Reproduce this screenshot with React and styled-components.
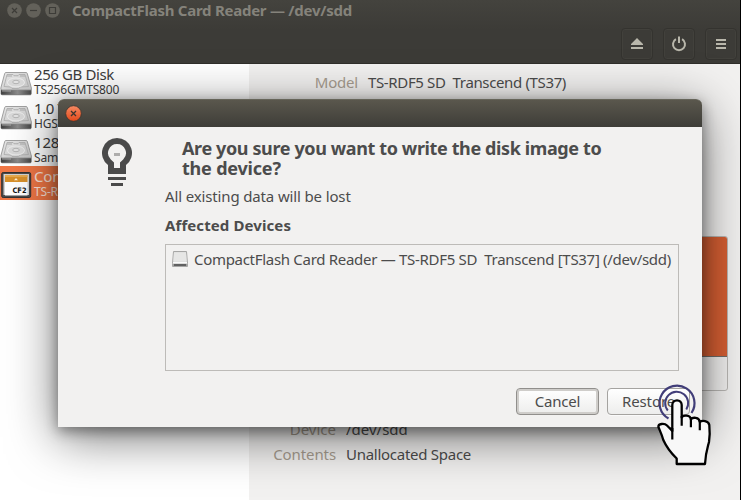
import React from "react";
import styled, { createGlobalStyle } from "styled-components";

const GlobalStyle = createGlobalStyle`
  * { box-sizing: border-box; }
  body { margin: 0; overflow: hidden; }
`;

const Screen = styled.div`
  position: relative;
  width: 741px;
  height: 500px;
  overflow: hidden;
  font-family: "Noto Sans", sans-serif;
  font-size: 15px;
  line-height: 20px;
  color: #4c4c4c;
`;

const Text = styled.span`
  display: block;
  white-space: pre;
  letter-spacing: ${(p) => p.$track || 0}px;
`;

/* ---------- Main window ---------- */

const Window = styled.div`
  display: flex;
  flex-direction: column;
  height: 500px;
  background: #f2f1f0;
  border-right: 1px solid #000;
`;

const Header = styled.header`
  flex: none;
  height: 64px;
  background: linear-gradient(#44433e, #3c3b37 30px);
  border-bottom: 1px solid #2f2e2a;
`;

const TitleBar = styled.div`
  display: flex;
  align-items: center;
  gap: 4px;
  height: 21px;
  padding-left: 7px;
`;

const WindowTitle = styled(Text)`
  margin: -2px 0 0 8px;
  color: #85837b;
  font-weight: 700;
`;

const ControlIcon = styled.svg`
  width: 15px;
  height: 15px;
  display: block;
`;

const Toolbar = styled.div`
  display: flex;
  justify-content: flex-end;
  gap: 10px;
  padding: 7px 3px 0 0;
`;

const ToolButton = styled.button`
  display: grid;
  place-items: center;
  width: 32px;
  height: 32px;
  padding: 0;
  border: 1px solid #34332f;
  border-radius: 4px;
  background: transparent;
  box-shadow: inset 0 0 0 1px #42413c;
`;

const Body = styled.div`
  display: flex;
  flex: 1;
  min-height: 0;
`;

const Sidebar = styled.nav`
  flex: none;
  width: 249px;
  background: #fff;
`;

const DeviceRow = styled.div`
  display: flex;
  align-items: center;
  gap: 2px;
  height: 34px;
  color: ${(p) => (p.$selected ? "#fbe3d9" : "#3c3c3c")};
  background: ${(p) => (p.$selected ? "#f07746" : "transparent")};
`;

const DeviceLabel = styled.div`
  display: flex;
  flex-direction: column;
  padding-bottom: 1px;
`;

const DeviceName = styled(Text)`
  line-height: 17px;
`;

const DeviceModel = styled(Text)`
  font-size: 12px;
  line-height: 13px;
`;

const DeviceIcon = styled.svg`
  width: 32px;
  height: 32px;
  flex: none;
`;

const Details = styled.main`
  flex: 1;
  display: flex;
  flex-direction: column;
  padding: 8px 12px 0 0;
`;

const Field = styled.div`
  display: grid;
  grid-template-columns: ${(p) => p.$label}px 1fr;
  column-gap: 10px;
  height: 25px;
`;

const FieldName = styled(Text)`
  justify-self: end;
  color: #a69c8f;
`;

const VolumeMap = styled.div`
  margin: 139px 0 28px 24px;
  height: 155px;
  border: 1px solid #b9b7b4;
  border-radius: 3px;
`;

const Volume = styled.div`
  height: 120px;
  background: #d65f33;
  border-bottom: 1px solid #6e6d6a;
  border-radius: 2px 2px 0 0;
`;

/* ---------- Dialog ---------- */

const Dialog = styled.section`
  position: absolute;
  left: 58px;
  top: 99px;
  width: 644px;
  height: 328px;
  display: flex;
  flex-direction: column;
  background: #f2f1f0;
  border-radius: 6px 6px 0 0;
  box-shadow: 0 4px 14px rgba(0, 0, 0, 0.4), 0 10px 50px rgba(0, 0, 0, 0.55);
`;

const DialogBar = styled.div`
  flex: none;
  display: flex;
  align-items: center;
  height: 28px;
  padding: 0 0 0 7px;
  border-radius: 6px 6px 0 0;
  background: linear-gradient(#5a574d, #3e3d38);
  border-top: 1px solid #66655a;
`;

const CloseIcon = styled.svg`
  width: 17px;
  height: 17px;
`;

const DialogBody = styled.div`
  flex: 1;
  display: grid;
  grid-template-columns: 107px 514px;
`;

const BulbIcon = styled.svg`
  width: 32px;
  height: 50px;
  margin: 10px 0 0 43px;
`;

const Message = styled.div`
  display: flex;
  flex-direction: column;
`;

const Heading = styled.h1`
  margin: 11px 0 8px 17px;
  font-size: 18px;
  line-height: 20px;
  font-weight: 700;
`;

const SectionTitle = styled(Text)`
  margin-top: 9px;
  font-weight: 700;
`;

const DeviceList = styled.div`
  height: 127px;
  margin-top: 9px;
  border: 1px solid #bdbbb8;
`;

const AffectedRow = styled.div`
  display: flex;
  align-items: center;
  gap: 6px;
  padding: 4px 6px;
`;

const DriveIcon = styled.svg`
  width: 16px;
  height: 16px;
  flex: none;
`;

const Actions = styled.footer`
  flex: none;
  display: flex;
  justify-content: flex-end;
  gap: 8px;
  padding: 0 12px 12px 0;
`;

const Button = styled.button`
  display: grid;
  place-items: center;
  width: 83px;
  height: 27px;
  padding: 0 0 2px;
  border: 1px solid ${(p) => (p.$focused ? "#918f8c" : "#a5a3a0")};
  border-radius: 4px;
  background: linear-gradient(#fff, #ededec);
  box-shadow: ${(p) => (p.$focused ? "inset 0 0 0 2px #cfcdca, inset 0 -2px 0 #b0aeab" : "0 1px 0 #fafafa")};
  font: inherit;
  color: #4c4c4c;
`;

const Pointer = styled.svg`
  position: absolute;
  left: 650px;
  top: 380px;
  width: 70px;
  height: 90px;
`;

/* ---------- Drawings ---------- */

const glyphs = {
  close: "M5 5l5 5M10 5l-5 5",
  minimize: "M4 7.5h7",
  maximize: "M4.5 4.5h6v6h-6z",
};

const Control = ({ kind }) => (
  <ControlIcon viewBox="0 0 15 15">
    <circle cx="7.5" cy="7.5" r="7.3" fill="#63615a" />
    <path d={glyphs[kind]} fill="none" stroke="#3d3c38" strokeWidth="1.2" />
  </ControlIcon>
);

const HardDisk = () => (
  <DeviceIcon viewBox="0 0 32 32">
    <defs>
      <linearGradient id="diskTop" x1="0" y1="0" x2="1" y2="1">
        <stop offset="0" stopColor="#e9e9e9" />
        <stop offset="1" stopColor="#c2c2c2" />
      </linearGradient>
      <linearGradient id="diskFront" x1="0" x2="1">
        <stop offset="0" stopColor="#3f3f3f" />
        <stop offset="0.55" stopColor="#8c8c8c" />
        <stop offset="1" stopColor="#484848" />
      </linearGradient>
    </defs>
    <path d="M1 24.5h30.2v4.3q0 1-1 1H2q-1 0-1-1z" fill="url(#diskFront)" stroke="#4f4f4f" strokeWidth=".6" />
    <path d="M6 7.5h20q1 0 1.3 1L31.4 23q.3 2-1 2H1.8q-1.2 0-1-2L4.7 8.5q.3-1 1.3-1z" fill="url(#diskTop)" stroke="#8b8b8b" strokeWidth=".8" />
    <path d="M2 26h9" stroke="#c8c8c8" strokeWidth=".7" />
    <path d="M7 9.5h6l1 1.2h4l1-1.2h6l3.5 12-8 .5-2 1.5H12L10.500 22 4 21.500z" fill="none" stroke="#aaa" strokeWidth=".8" />
    <ellipse cx="16" cy="17.5" rx="8.5" ry="4.5" fill="#d8d8d8" stroke="#f1f1f1" strokeWidth=".8" />
    <ellipse cx="16" cy="17" rx="3.3" ry="1.7" fill="#e3e3e3" stroke="#aaa" strokeWidth=".8" />
    <path d="M7 11h5M20 11h5" stroke="#a9a9a9" />
  </DeviceIcon>
);

const FlashCard = () => (
  <DeviceIcon viewBox="0 0 32 32">
    <rect x="1.7" y="5.5" width="29" height="25" rx="1.5" fill="#4b4b4b" stroke="#333" />
    <path d="M3.5 28V7H29v21z" fill="#d4d4d4" />
    <rect x="5" y="8" width="22.500" height="20.500" fill="#fff" />
    <path d="M5 8h22.500v7H5z" fill="#d9912a" />
    <path d="M5 8h22.500v2H5z" fill="#e8ab4e" />
    <path d="M14 13.2l2-2.2 2 2.2z" fill="#fff3dc" />
    <text x="12.500" y="26" fontFamily="DejaVu Sans" fontWeight="700" fontSize="7.500" textLength="14" lengthAdjust="spacingAndGlyphs" fill="#111">CF2</text>
  </DeviceIcon>
);

const devices = [
  { name: "256 GB Disk", model: "TS256GMTS800", track: -0.4, Icon: HardDisk },
  { name: "1.0 T", model: "HGST", track: -0.4, Icon: HardDisk },
  { name: "128", model: "Sams", track: -0.2, Icon: HardDisk },
  { name: "Com", model: "TS-R", track: -0.2, Icon: FlashCard, selected: true },
];

export default function App() {
  return (
    <Screen>
      <GlobalStyle />
      <Window>
        <Header>
          <TitleBar>
            <Control kind="close" />
            <Control kind="minimize" />
            <Control kind="maximize" />
            <WindowTitle $track={-0.26}>CompactFlash Card Reader — /dev/sdd</WindowTitle>
          </TitleBar>
          <Toolbar>
            <ToolButton aria-label="Eject">
              <svg width="16" height="16" viewBox="0 0 16 16" fill="#b9b7ab">
                <path d="M8 2l6 6v1H2V8zM2 11h12v2H2z" />
              </svg>
            </ToolButton>
            <ToolButton aria-label="Power off">
              <svg width="16" height="16" viewBox="0 0 16 16" fill="none" stroke="#b9b7ab" strokeWidth="2">
                <path d="M4.9 3.2a6 6 0 1 0 6.2 0M8 .5v6.5" />
              </svg>
            </ToolButton>
            <ToolButton aria-label="Menu">
              <svg width="16" height="16" viewBox="0 0 16 16" fill="#b9b7ab">
                <path d="M3 3h10v2H3zM3 7h10v2H3zM3 11h10v2H3z" />
              </svg>
            </ToolButton>
          </Toolbar>
        </Header>
        <Body>
          <Sidebar>
            {devices.map(({ name, model, track, Icon, selected }) => (
              <DeviceRow key={name} $selected={selected}>
                <Icon />
                <DeviceLabel>
                  <DeviceName $track={track}>{name}</DeviceName>
                  <DeviceModel $track={-0.18}>{model}</DeviceModel>
                </DeviceLabel>
              </DeviceRow>
            ))}
          </Sidebar>
          <Details>
            <Field $label={109}>
              <FieldName $track={-0.2}>Model</FieldName>
              <Text $track={-0.36}>{"TS-RDF5 SD  Transcend (TS37)"}</Text>
            </Field>
            <VolumeMap>
              <Volume />
            </VolumeMap>
            <Field $label={87}>
              <FieldName>Device</FieldName>
              <Text>/dev/sdd</Text>
            </Field>
            <Field $label={87}>
              <FieldName $track={-0.1}>Contents</FieldName>
              <Text $track={-0.27}>Unallocated Space</Text>
            </Field>
          </Details>
        </Body>
      </Window>

      <Dialog role="dialog">
        <DialogBar>
          <CloseIcon viewBox="0 0 17 17">
            <defs>
              <linearGradient id="closeFill" x1="0" x2="0" y1="0" y2="1">
                <stop offset="0" stopColor="#f58a63" />
                <stop offset="1" stopColor="#e2491a" />
              </linearGradient>
            </defs>
            <circle cx="8.5" cy="8.5" r="7.8" fill="url(#closeFill)" stroke="#3b352f" strokeWidth=".8" />
            <path d="M6 6l5 5M11 6l-5 5" stroke="#3b352f" strokeWidth="1.3" />
          </CloseIcon>
        </DialogBar>
        <DialogBody>
          <BulbIcon viewBox="0 0 32 50" fill="#4a4a4a">
            <path fillRule="evenodd" d="M16 1a15 15 0 0 1 9 27v9H7v-9a15 15 0 0 1 9-27zM16 7a9 9 0 0 0-6.2 15.5L13 25.5V31h6v-5.5l3.2-3A9 9 0 0 0 16 7z" />
            <path d="M7 40h18v3H7zM10 46h12v3H10z" />
            <path d="M13 16h6v3h-6z" fill="#aeadac" />
          </BulbIcon>
          <Message>
            <Heading>
              <Text $track={-0.38}>Are you sure you want to write the disk image to</Text>
              <Text $track={-0.2}>the device?</Text>
            </Heading>
            <Text $track={-0.14}>All existing data will be lost</Text>
            <SectionTitle $track={0.1}>Affected Devices</SectionTitle>
            <DeviceList>
              <AffectedRow>
                <DriveIcon viewBox="0 0 16 16">
                  <path d="M1.5.5h13l1 12v3H.5v-3z" fill="#dcdcdb" stroke="#a6a6a5" />
                  <path d="M2 1.5h12l.6 9H1.4z" fill="#e6e6e5" />
                  <path d="M1 11.5h14" stroke="#fafafa" />
                  <path d="M1.500 14h13" stroke="#383838" strokeWidth="1.5" />
                </DriveIcon>
                <Text $track={-0.3}>{"CompactFlash Card Reader — TS-RDF5 SD  Transcend [TS37] (/dev/sdd)"}</Text>
              </AffectedRow>
            </DeviceList>
          </Message>
        </DialogBody>
        <Actions>
          <Button $focused>
            <Text $track={-0.2}>Cancel</Text>
          </Button>
          <Button>
            <Text $track={-0.1}>Restore</Text>
          </Button>
        </Actions>
      </Dialog>

      <Pointer viewBox="0 0 70 90" fill="none">
        <path d="M18.5 38.5A17.5 17.5 0 1 1 41.5 33" stroke="#413d78" strokeWidth="2.200" />
        <path d="M17.8 30.500A11.500 11.500 0 1 1 36.300 29.500" stroke="#413d78" strokeWidth="2" />
        <path
          d="M22.3 51V25a4.7 4.7 0 0 1 9.4 0V37.5C33 34.8 40.5 34.5 40.9 39.5C42.5 36.8 49.3 37 49.8 42C52 40.3 58.5 40.5 59.3 45C60 52 59.8 57 59 62C57.5 68 55.7 72 55 84H26.7V78.5C21 73 16 66 13.3 60C12 55 10 51 8.4 47C8 43.5 14.5 43 17 45.5Q19.5 48 22.3 51Z"
          fill="#f8f8f8"
          stroke="#000"
          strokeWidth="2.300"
          strokeLinejoin="round"
        />
        <path d="M22.3 48v11.5M31.7 36v9.700M40.9 38.500v8.700M49.8 41v9.200" stroke="#000" strokeWidth="2.200" />
      </Pointer>
    </Screen>
  );
}
